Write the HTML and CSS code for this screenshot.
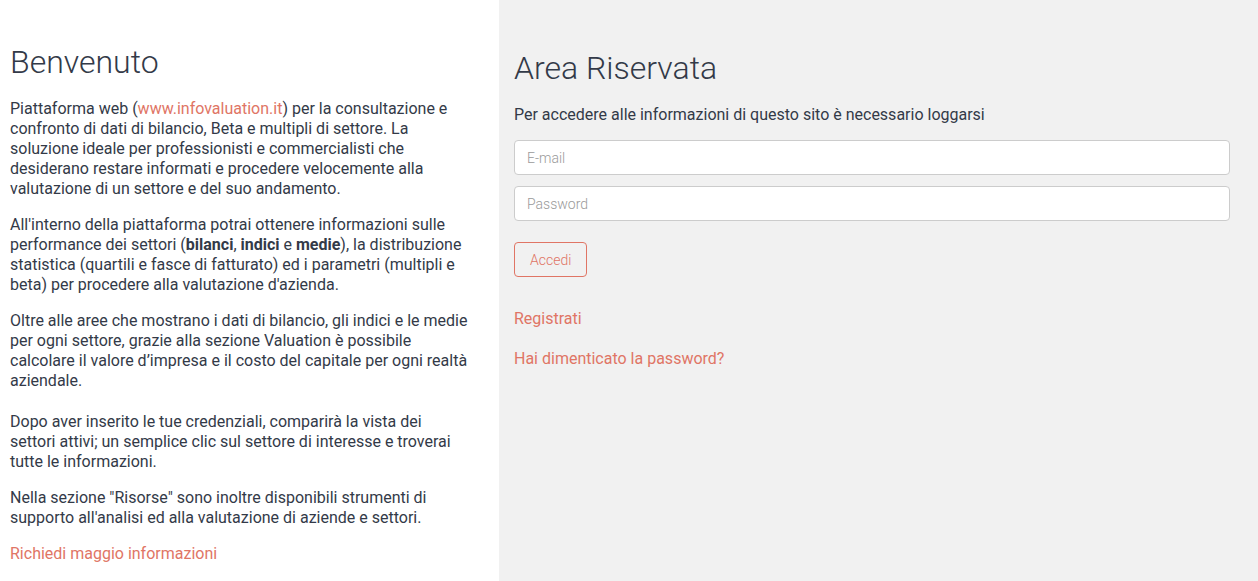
FILE: index.html
```html
<!DOCTYPE html>
<html lang="it">
<head>
<meta charset="utf-8">
<title>Benvenuto</title>
<link rel="stylesheet" href="styles.css">
</head>
<body>
<div class="page">
  <section class="intro">
    <h1 class="title">Benvenuto</h1>
    <p>Piattaforma web (<a href="#" class="link">www.infovaluation.it</a>) per la consultazione e confronto di dati di bilancio, Beta e multipli di settore. La soluzione ideale per professionisti e commercialisti che desiderano restare informati e procedere velocemente alla valutazione di un settore e del suo andamento.</p>
    <p>All'interno della piattaforma potrai ottenere informazioni sulle performance dei settori (<b>bilanci</b>, <b>indici</b> e <b>medie</b>), la distribuzione statistica (quartili e fasce di fatturato) ed i parametri (multipli e beta) per procedere alla valutazione d'azienda.</p>
    <p>Oltre alle aree che mostrano i dati di bilancio, gli indici e le medie per ogni settore, grazie alla sezione Valuation è possibile calcolare il valore d’impresa e il costo del capitale per ogni realtà aziendale.</p>
    <p class="spaced">Dopo aver inserito le tue credenziali, comparirà la vista dei settori attivi; un semplice clic sul settore di interesse e troverai tutte le informazioni.</p>
    <p>Nella sezione "Risorse" sono inoltre disponibili strumenti di supporto all'analisi ed alla valutazione di aziende e settori.</p>
    <p><a href="#" class="link">Richiedi maggio informazioni</a></p>
  </section>
  <section class="login">
    <h2 class="title">Area Riservata</h2>
    <p class="lead">Per accedere alle informazioni di questo sito è necessario loggarsi</p>
    <form class="form">
      <input class="field" type="text" placeholder="E-mail">
      <input class="field" type="password" placeholder="Password">
      <button type="button" class="btn">Accedi</button>
    </form>
    <a href="#" class="link block-link first">Registrati</a>
    <a href="#" class="link block-link">Hai dimenticato la password?</a>
  </section>
</div>
</body>
</html>
```
FILE: styles.css
```css
* { box-sizing: border-box; }
html, body {
  margin: 0;
  height: 100%;
}
body {
  font-family: Roboto, "Liberation Sans", sans-serif;
  font-size: 16px;
  line-height: 20px;
  color: #333a48;
  background: #fff;
}
.page {
  display: flex;
  min-height: 581px;
}
.intro {
  width: 499px;
  flex: none;
  padding: 42px 30px 0 10px;
  background: #fff;
}
.login {
  flex: 1;
  background: #f1f1f1;
  padding: 48px 28px 0 15px;
}
.title {
  margin: 0 0 17px;
  font-size: 32px;
  line-height: 40px;
  font-weight: 300;
}
p {
  margin: 0 0 16px;
}
p.spaced {
  margin-top: 21px;
}
.link {
  color: #e07565;
  text-decoration: none;
}
.lead {
  margin: 0 0 15px;
}
.form {
  display: flex;
  flex-direction: column;
  align-items: flex-start;
}
.field {
  width: 100%;
  height: 35px;
  margin: 0 0 11px;
  padding: 0 12px;
  border: 1px solid #ccc;
  border-radius: 4px;
  background: #fff;
  font-family: Roboto, "Liberation Sans", sans-serif;
  font-size: 14px;
  font-weight: 300;
  color: #333;
}
.field::placeholder {
  color: #9a9a9a;
}
.btn {
  margin-top: 10px;
  height: 35px;
  padding: 0 15px;
  background: transparent;
  border: 1px solid #e07565;
  border-radius: 4px;
  color: #e07565;
  font-family: Roboto, "Liberation Sans", sans-serif;
  font-size: 14px;
  font-weight: 300;
}
.block-link {
  display: block;
  margin-bottom: 20px;
}
.block-link.first {
  margin-top: 32px;
}
```
